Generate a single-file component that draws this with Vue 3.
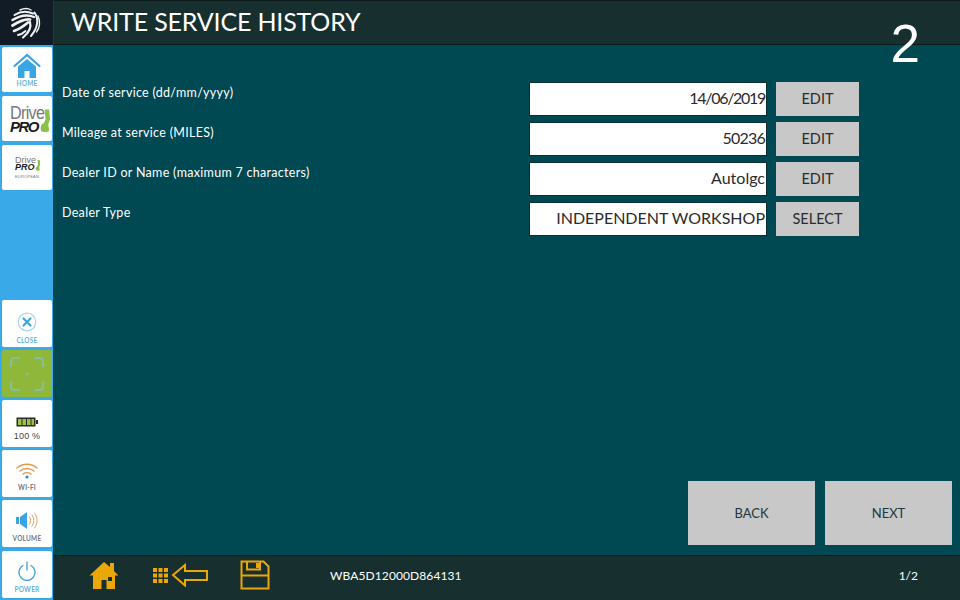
<template>
  <div class="screen">
    <aside class="sidebar">
      <div class="logo">
        <svg width="53" height="45" viewBox="0 0 53 45" fill="none" stroke="#f2f2f2" stroke-linecap="round">
          <path d="M20 10C24 8 28 8 31 10" stroke-width="1.400" />
          <path d="M14.500 15C20 11.500 27 11 33 13.500" stroke-width="2" />
          <path d="M12.500 20C19 16 27 14 34 17" stroke-width="2.400" />
          <path d="M12.500 25.500C19 21.500 25 18.500 30 19.500" stroke-width="2.800" />
          <path d="M14 31C20 29 25 25 28 22.500" stroke-width="2.600" />
          <path d="M34.500 12.500C39 19 38 28 31 36" stroke-width="2" />
          <path d="M38 16C40.500 21 40 28 36.500 32" stroke-width="1.400" />
          <path d="M30 22C31.500 27 28.500 33 23 37.500" stroke-width="2.200" />
          <path d="M18 35C21 34.500 23.500 33 25.500 31" stroke-width="1.800" />
        </svg>
      </div>

      <div class="tile first">
        <svg width="28" height="26" viewBox="0 0 28 26">
          <path d="M1.500 13 14 2 26.500 13" fill="none" stroke="#3aa5e4" stroke-width="2.200" stroke-linecap="round" />
          <path d="M5 13.500 14 6l9 7.500V25h-6.500v-7h-5v7H5z" fill="#3aa5e4" />
        </svg>
        <span class="tile-label blue">HOME</span>
      </div>

      <div class="tile brand">
        <span class="brand-top">Drive</span>
        <span class="brand-pro">PRO<svg class="brand-mark" width="11" height="24" viewBox="0 0 12 25"><path d="M5 0h5l1 11-2 5 1 7c-2 2-7 2-9 0-1-4 0-7 3-8l2-4z" fill="#8cc04a" /></svg></span>
      </div>

      <div class="tile brand small">
        <span class="brand-top">Drive</span>
        <span class="brand-pro">PRO<svg class="brand-mark" width="6" height="11" viewBox="0 0 12 25"><path d="M5 0h5l1 11-2 5 1 7c-2 2-7 2-9 0-1-4 0-7 3-8l2-4z" fill="#8cc04a" /></svg></span>
        <span class="brand-sub">EUROPEAN</span>
      </div>

      <div class="spacer"></div>

      <div class="tile close low">
        <svg width="20" height="20" viewBox="0 0 20 20" fill="none">
          <circle cx="10" cy="10" r="8.800" stroke="#a9d4ee" stroke-width="1.200" />
          <path d="m6.500 6.500 7 7m0-7-7 7" stroke="#3aa5e4" stroke-width="2.200" stroke-linecap="round" />
        </svg>
        <span class="tile-label blue">CLOSE</span>
      </div>

      <div class="tile green">
        <svg width="36" height="36" viewBox="0 0 36 36" fill="none" stroke="#85bfa0" stroke-width="1.800">
          <path d="M2 11V5q0-3 3-3h6M25 2h6q3 0 3 3v6M34 25v6q0 3-3 3h-6M11 34H5q-3 0-3-3v-6" />
          <circle cx="18" cy="18" r="1.400" fill="#85bfa0" stroke="none" />
        </svg>
      </div>

      <div class="tile low">
        <svg width="22" height="10" viewBox="0 0 22 10">
          <rect x="0.500" y="0.500" width="19" height="9" fill="#2a2a2a" />
          <rect x="20" y="3" width="2" height="4" fill="#2a2a2a" />
          <path d="M2 2h3.500v6H2zM6.500 2H10v6H6.500zM11 2h3.500v6H11zM15.500 2H18v6h-2.500z" fill="#9cc53f" />
        </svg>
        <span class="tile-label battery">100 %</span>
      </div>

      <div class="tile">
        <svg width="22" height="17" viewBox="0 0 22 17" fill="none" stroke="#e59a56" stroke-width="1.500" stroke-linecap="round">
          <path d="M1 6c5.500-5 14.500-5 20 0" />
          <path d="M4 9c3.800-3.300 10.200-3.300 14 0" />
          <path d="M7 12c2.200-1.700 5.800-1.700 8 0" />
          <circle cx="11" cy="15" r="1.600" fill="#2a8fcc" stroke="none" />
        </svg>
        <span class="tile-label grey">WI-FI</span>
      </div>

      <div class="tile">
        <svg width="23" height="19" viewBox="0 0 23 19" fill="none">
          <path d="M0 6h3v7H0zM4 6l7-5v17l-7-5z" fill="#3aa5e4" />
          <path d="M13.500 6c1.500 2 1.500 5 0 7M16 4c2.500 3 2.500 8 0 11M18.500 2c3.500 4 3.500 11 0 15" stroke="#e59a56" stroke-width="1" stroke-linecap="round" />
        </svg>
        <span class="tile-label grey">VOLUME</span>
      </div>

      <div class="tile last">
        <svg width="18" height="20" viewBox="0 0 18 20" fill="none" stroke="#4aa8dc" stroke-width="1.400" stroke-linecap="round">
          <path d="M5 4.500a8 8 0 1 0 8 0" />
          <path d="M9 1v8" />
        </svg>
        <span class="tile-label blue">POWER</span>
      </div>
    </aside>

    <div class="content">
      <header class="topbar">
        <h1>WRITE SERVICE HISTORY</h1>
      </header>

      <main class="main">
        <div class="form">
          <div class="row" v-for="row in rows" :key="row.label">
            <span class="label">{{ row.label }}</span>
            <span class="value" :style="{ letterSpacing: row.spacing }">{{ row.value }}</span>
            <button class="btn small-btn">{{ row.action }}</button>
          </div>
        </div>

        <div class="nav">
          <button class="btn big-btn">BACK</button>
          <button class="btn big-btn">NEXT</button>
        </div>
      </main>

      <footer class="footer">
        <svg width="30" height="28" viewBox="0 0 30 28">
          <path d="M15 1 21 6V2h4v8l4.500 4.500H26V28H17.500V19h-5v9H4V14.500H.500z" fill="#eba607" />
          <rect x="19" y="16" width="4" height="4" fill="#17302f" />
        </svg>
        <svg class="f-back" width="56" height="24" viewBox="0 0 56 24">
          <g fill="#eba607">
            <rect x="0" y="5" width="4" height="4" /><rect x="5.500" y="5" width="4" height="4" /><rect x="11" y="5" width="4" height="4" />
            <rect x="0" y="10.500" width="4" height="4" /><rect x="5.500" y="10.500" width="4" height="4" /><rect x="11" y="10.500" width="4" height="4" />
            <rect x="0" y="16" width="4" height="4" /><rect x="5.500" y="16" width="4" height="4" /><rect x="11" y="16" width="4" height="4" />
          </g>
          <path d="M20 12 32 2v6h22v9H32v5.500z" fill="none" stroke="#eba607" stroke-width="2" />
        </svg>
        <svg class="f-save" width="30" height="30" viewBox="0 0 30 30" fill="none" stroke="#eba607" stroke-width="2">
          <path d="M1.500 1.500h22l5 5v22h-27z" />
          <path d="M1.500 15.500h27M7 1.500v8h13v-8" />
          <rect x="16" y="3" width="3" height="5" fill="#eba607" stroke="none" />
        </svg>
        <span class="vin">WBA5D12000D864131</span>
        <span class="page">1/2</span>
      </footer>
    </div>

    <div class="step">2</div>
  </div>
</template>

<script setup>
const rows = [
  { label: 'Date of service (dd/mm/yyyy)', value: '14/06/2019', action: 'EDIT', spacing: '-1.300px' },
  { label: 'Mileage at service (MILES)', value: '50236', action: 'EDIT', spacing: '-0.800px' },
  { label: 'Dealer ID or Name (maximum 7 characters)', value: 'Autolgc', action: 'EDIT', spacing: '0' },
  { label: 'Dealer Type', value: 'INDEPENDENT WORKSHOP', action: 'SELECT', spacing: '0' }
]
</script>

<style>
body {
  margin: 0;
  overflow: hidden;
}
</style>

<style scoped>
.screen {
  position: relative;
  display: flex;
  width: 960px;
  height: 600px;
  overflow: hidden;
  font-family: Lato, "Open Sans", sans-serif;
  background: #004852;
}

/* left column */
.sidebar {
  display: flex;
  flex-direction: column;
  width: 53px;
  flex: none;
  background: #39a9e8;
  box-sizing: border-box;
  padding-bottom: 2px;
}

.logo {
  height: 45px;
  flex: none;
  background: #111c26;
}

.logo svg {
  display: block;
}

.tile {
  display: flex;
  flex-direction: column;
  align-items: center;
  justify-content: center;
  gap: 5px;
  width: 50px;
  height: 47px;
  flex: none;
  margin: 3px 0 0 2px;
  padding-top: 6px;
  box-sizing: border-box;
  background: #fff;
  border-radius: 2px;
  overflow: hidden;
}

.tile.low {
  padding-top: 10px;
}

.tile.first {
  margin-top: 2px;
  height: 45px;
  gap: 1px;
  padding-top: 2px;
}

.tile.brand {
  height: 45px;
  margin-top: 4px;
  padding-top: 0;
  gap: 0;
  align-items: flex-start;
  padding-left: 8px;
  font-family: "Liberation Sans", sans-serif;
}

.brand-top {
  font-size: 19px;
  line-height: 17px;
  color: #777;
  letter-spacing: -0.800px;
  transform: scaleX(0.85);
  transform-origin: left center;
}

.brand-pro {
  display: flex;
  align-items: flex-end;
  height: 12px;
  font-size: 15px;
  line-height: 12px;
  font-weight: 700;
  font-style: italic;
  color: #1c1c1c;
  letter-spacing: -1.500px;
}

.brand-mark {
  margin: -15px 0 0 2px;
}

.tile.brand.small {
  padding-left: 13px;
}

.tile.brand.small .brand-top {
  font-size: 9px;
  line-height: 7px;
  letter-spacing: 0;
  transform: none;
}

.tile.brand.small .brand-pro {
  height: 7px;
  font-size: 9px;
  line-height: 7px;
  letter-spacing: 0;
}

.tile.brand.small .brand-mark {
  margin: -6px 0 0 0;
}

.brand-sub {
  margin-top: 3px;
  font-size: 4px;
  line-height: 5px;
  color: #777;
  letter-spacing: 0.200px;
}

.spacer {
  flex: 1;
}

.tile.close {
  margin-top: 0;
}

.tile.green {
  background: #8fb83b;
  padding-top: 0;
}

.tile.last {
  margin-top: 4px;
}

.tile-label {
  font-size: 6.500px;
  line-height: 8px;
  font-weight: 700;
  letter-spacing: 0.200px;
}

.tile-label.blue {
  color: #62b2e2;
}

.tile-label.grey {
  color: #777;
}

.tile-label.battery {
  font-family: "Liberation Sans", sans-serif;
  font-size: 9px;
  font-weight: 400;
  color: #444;
}

/* right side */
.content {
  display: flex;
  flex-direction: column;
  flex: 1;
  margin-left: 1px;
  min-width: 0;
}

.topbar {
  display: flex;
  align-items: center;
  height: 45px;
  flex: none;
  padding: 0 0 3px 17px;
  box-sizing: border-box;
  background: #17302f;
  border-top: 1px solid #0c1a1c;
  border-bottom: 1px solid #0c1a1c;
}

.topbar h1 {
  margin: 0;
  font-size: 25px;
  font-weight: 400;
  color: #fff;
  letter-spacing: -0.170px;
}

.main {
  display: flex;
  flex-direction: column;
  justify-content: space-between;
  flex: 1;
  padding: 37px 8px 10px 8px;
  min-height: 0;
}

.form {
  display: flex;
  flex-direction: column;
  gap: 6px;
}

.row {
  display: flex;
  align-items: flex-start;
  height: 34px;
}

.label {
  width: 467px;
  flex: none;
  padding-top: 3px;
  font-size: 12.500px;
  line-height: 16px;
  letter-spacing: 0.300px;
  color: #fff;
}

.value {
  width: 238px;
  height: 34px;
  flex: none;
  padding-right: 1px;
  box-sizing: border-box;
  background: #fff;
  border: 1px solid #0a2c33;
  font-size: 16px;
  line-height: 30px;
  text-align: right;
  color: #2b2b2b;
  white-space: nowrap;
}

.btn {
  border: none;
  padding: 0;
  background: #c8c8c8;
  color: #2b2b2b;
  font-family: inherit;
  text-align: center;
}

.small-btn {
  width: 83px;
  height: 34px;
  margin-left: 9px;
  padding-bottom: 2px;
  font-size: 14.500px;
}

.nav {
  display: flex;
  justify-content: flex-end;
  gap: 10px;
}

.big-btn {
  width: 127px;
  height: 64px;
  font-size: 13px;
  color: #20383c;
}

.footer {
  display: flex;
  align-items: center;
  height: 45px;
  flex: none;
  box-sizing: border-box;
  padding: 0 0 6px 35px;
  background: #17302f;
  border-top: 1px solid #0c1a1c;
  color: #fff;
}

.f-back {
  margin-left: 34px;
}

.f-save {
  margin-left: 31px;
}

.vin {
  margin-left: 60px;
  font-size: 12px;
  letter-spacing: 0.100px;
}

.page {
  margin-left: auto;
  margin-right: 42px;
  font-size: 12px;
}

/* step number sits over the header edge */
.step {
  position: absolute;
  top: 13px;
  right: 40px;
  font-family: "Liberation Sans", sans-serif;
  font-size: 53px;
  line-height: 61px;
  color: #fff;
}
</style>
